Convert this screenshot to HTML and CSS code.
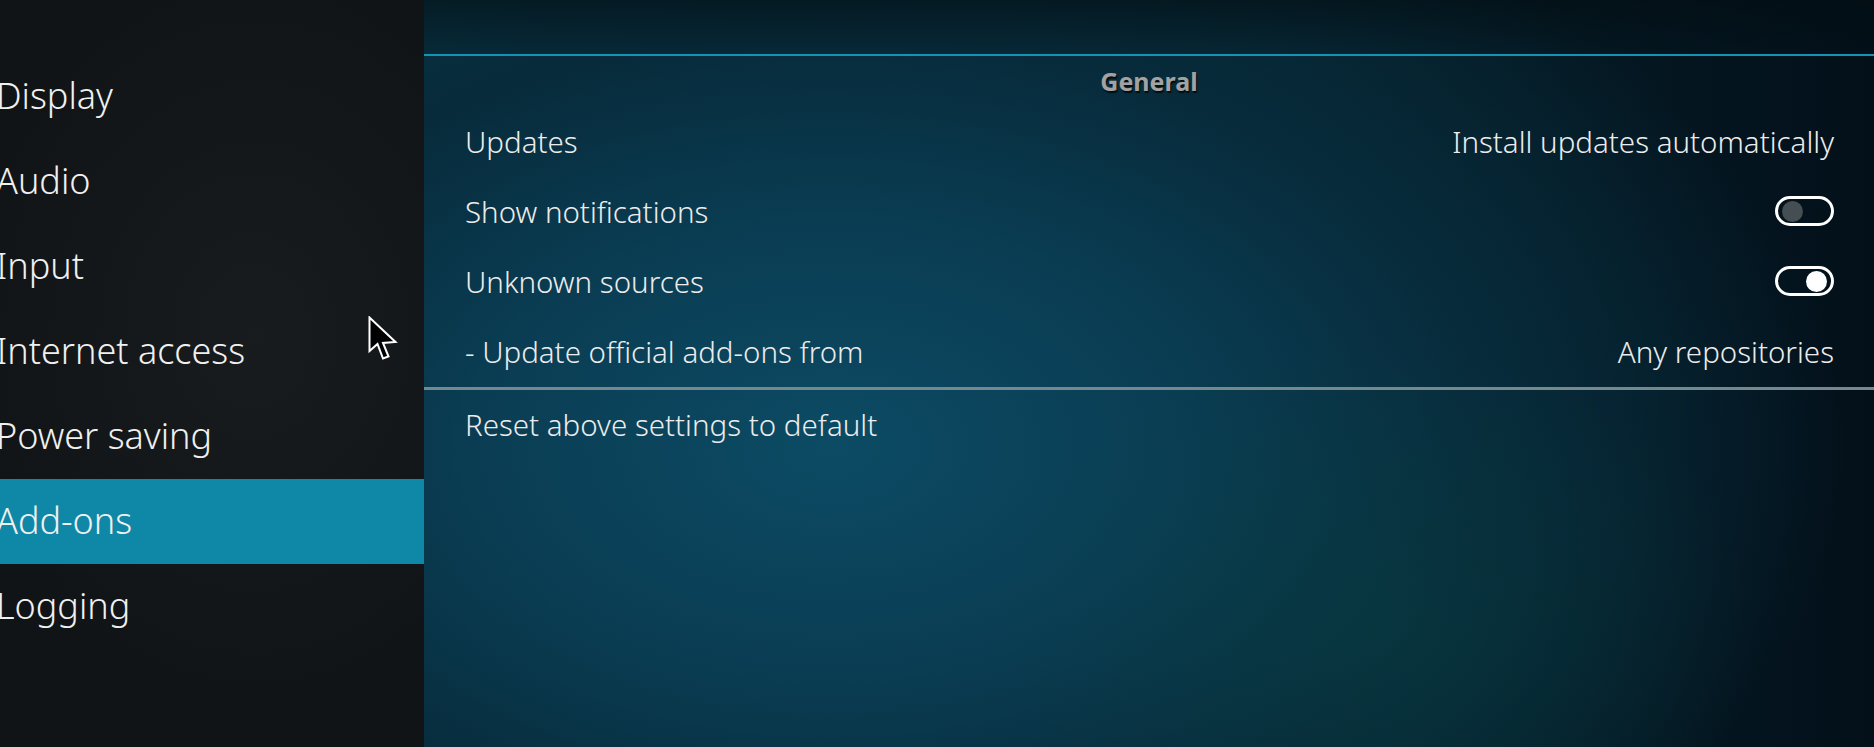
FILE: index.html
```html
<!DOCTYPE html>
<html lang="en">
<head>
<meta charset="utf-8">
<title>Settings - Add-ons</title>
<link rel="stylesheet" href="styles.css">
</head>
<body>
<div class="screen">
  <nav class="sidebar">
    <div class="nav-item">Display</div>
    <div class="nav-item">Audio</div>
    <div class="nav-item">Input</div>
    <div class="nav-item">Internet access</div>
    <div class="nav-item">Power saving</div>
    <div class="nav-item active">Add-ons</div>
    <div class="nav-item">Logging</div>
  </nav>
  <main class="content">
    <div class="topband"></div>
    <div class="blue-line"></div>
    <div class="group-title">General</div>
    <div class="row"><span class="label">Updates</span><span class="value">Install updates automatically</span></div>
    <div class="row"><span class="label">Show notifications</span><span class="toggle"><span class="knob"></span></span></div>
    <div class="row"><span class="label">Unknown sources</span><span class="toggle on"><span class="knob"></span></span></div>
    <div class="row"><span class="label">- Update official add-ons from</span><span class="value">Any repositories</span></div>
    <div class="separator"></div>
    <div class="row"><span class="label">Reset above settings to default</span></div>
  </main>
  <svg class="cursor" width="30" height="46" viewBox="0 0 30 46">
    <path d="M1.5 1.5 L1.5 35 L9.5 28 L15 42.5 L20.5 40.5 L15 27 L27.5 26 Z" fill="#000" stroke="#fff" stroke-width="2" stroke-linejoin="miter"/>
  </svg>
</div>
</body>
</html>
```
FILE: styles.css
```css
html, body {
  margin: 0;
  padding: 0;
  width: 1874px;
  height: 747px;
  overflow: hidden;
  background: #06141a;
}

.screen {
  position: relative;
  display: flex;
  width: 1874px;
  height: 747px;
  font-family: "Noto Sans", "Open Sans", sans-serif;
  color: #ececec;
}

.sidebar {
  width: 424px;
  flex: none;
  padding-top: 54px;
  box-sizing: border-box;
  background:
    radial-gradient(ellipse 70% 50% at 60% 45%, rgba(30,34,36,0.55), rgba(0,0,0,0) 100%),
    #101416;
  overflow: hidden;
}

.nav-item {
  height: 85px;
  box-sizing: border-box;
  padding-bottom: 2px;
  display: flex;
  align-items: center;
  font-size: 36px;
  font-weight: 300;
  text-indent: -4px;
  color: #f0f0f0;
  white-space: nowrap;
}

.nav-item.active {
  background: #0f87a7;
}

.content {
  flex: 1;
  display: flex;
  flex-direction: column;
  background:
    radial-gradient(ellipse 26% 38% at 66% 84%, rgba(8,66,64,0.4), rgba(0,0,0,0) 100%),
    radial-gradient(ellipse 70% 85% at 28% 60%, #0c4b64 0%, #0a3d53 35%, #072b3b 65%, rgba(5,22,30,0) 100%),
    linear-gradient(90deg, #083442 0%, #06202b 60%, #03101a 100%);
}

.topband {
  height: 54px;
  flex: none;
  background: linear-gradient(180deg, rgba(2,12,16,0.55), rgba(2,12,16,0.1));
}

.blue-line {
  height: 2px;
  flex: none;
  background: #1493b5;
}

.group-title {
  height: 51px;
  flex: none;
  box-sizing: border-box;
  padding-bottom: 2px;
  display: flex;
  align-items: center;
  justify-content: center;
  font-size: 25px;
  font-weight: 700;
  color: #a2a2a2;
  text-shadow: 1px 2px 1px rgba(0,0,0,0.7);
}

.row {
  height: 70px;
  flex: none;
  box-sizing: border-box;
  display: flex;
  align-items: center;
  justify-content: space-between;
  padding: 0 40px 2px 41px;
  font-size: 29.5px;
  font-weight: 300;
  white-space: nowrap;
}

.label, .value {
  color: #ececec;
}

.separator {
  height: 3px;
  flex: none;
  background: #74898e;
}

.toggle {
  width: 59px;
  height: 30px;
  box-sizing: border-box;
  border: 3px solid #ffffff;
  border-radius: 15px;
  display: flex;
  align-items: center;
  padding: 0 4px;
}

.knob {
  width: 21px;
  height: 21px;
  border-radius: 50%;
  background: #454e53;
}

.toggle.on {
  justify-content: flex-end;
}

.toggle.on .knob {
  background: #ffffff;
}

.cursor {
  position: absolute;
  left: 368px;
  top: 316px;
}
```
